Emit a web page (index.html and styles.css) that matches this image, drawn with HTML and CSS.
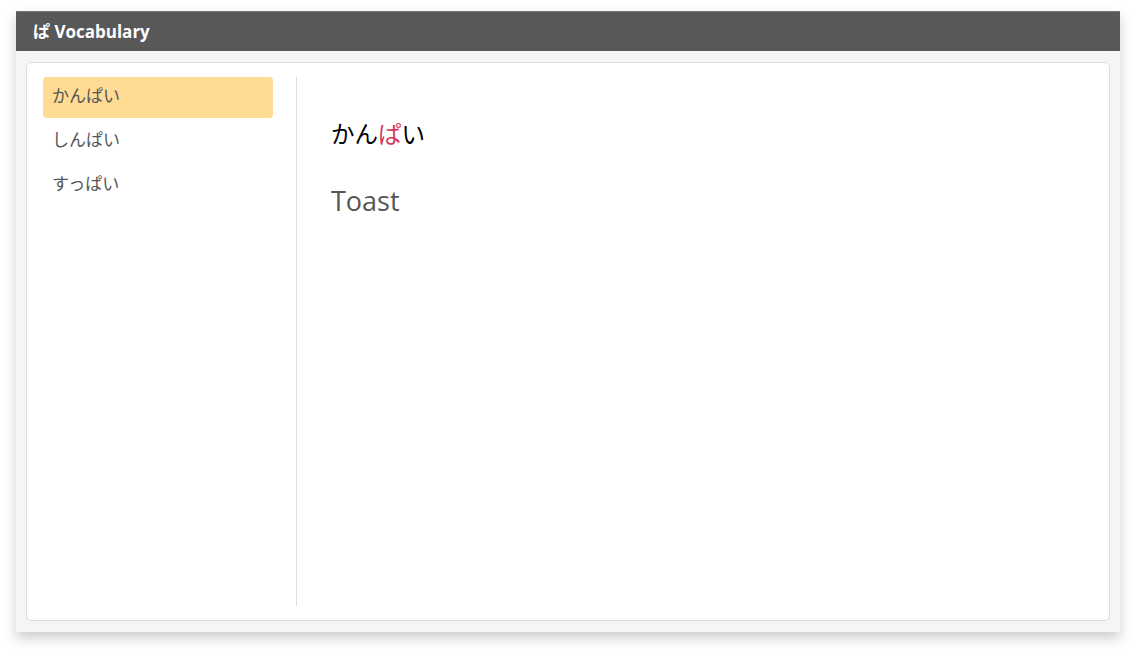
FILE: index.html
```html
<!DOCTYPE html>
<html lang="ja">
<head>
<meta charset="utf-8">
<title>Vocabulary</title>
<link rel="stylesheet" href="styles.css">
</head>
<body>
<div class="window">
  <header class="titlebar">ぱ Vocabulary</header>
  <div class="window-body">
    <div class="card">
      <nav class="sidebar">
        <div class="item active">かんぱい</div>
        <div class="item">しんぱい</div>
        <div class="item">すっぱい</div>
      </nav>
      <main class="detail">
        <h1 class="word">かん<span class="hl">ぱ</span>い</h1>
        <p class="meaning">Toast</p>
      </main>
    </div>
  </div>
</div>
</body>
</html>
```
FILE: styles.css
```css
html, body {
  margin: 0;
  padding: 0;
  background: #ffffff;
  font-family: "Open Sans", "Noto Sans CJK JP", sans-serif;
}
body {
  padding: 11px 16px 21px 16px;
}
.window {
  width: 1104px;
  height: 621px;
  display: flex;
  flex-direction: column;
  background: #f5f5f5;
  box-shadow: 0 6px 12px rgba(0, 0, 0, 0.2);
}
.titlebar {
  height: 40px;
  flex: none;
  background: #585858;
  border-top: 1px solid #777;
  box-sizing: border-box;
  color: #ffffff;
  font-weight: 700;
  font-size: 17px;
  line-height: 39px;
  padding-left: 17px;
  font-family: "Open Sans", "Noto Sans CJK JP", sans-serif;
}
.window-body {
  flex: 1;
  padding: 11px 10px 11px 10px;
  display: flex;
}
.card {
  flex: 1;
  background: #ffffff;
  border: 1px solid #dcdcdc;
  border-radius: 5px;
  display: flex;
  padding: 14px 0 14px 16px;
}
.sidebar {
  width: 230px;
  padding-right: 23px;
  border-right: 1px solid #dedede;
}
.item {
  height: 41px;
  margin-bottom: 3px;
  border-radius: 4px;
  padding-left: 9px;
  line-height: 36px;
  font-size: 17px;
  color: #555555;
  font-family: "Noto Sans CJK JP", sans-serif;
}
.item.active {
  background: #ffdb94;
}
.detail {
  flex: 1;
  padding-left: 34px;
}
.word {
  margin: 36px 0 0 0;
  font-size: 23.5px;
  font-weight: 400;
  color: #000000;
  line-height: 40px;
  font-family: "Noto Sans CJK JP", sans-serif;
}
.hl {
  color: #d6395f;
}
.meaning {
  margin: 30px 0 0 0;
  font-size: 27px;
  color: #555555;
  line-height: 36px;
}
```
